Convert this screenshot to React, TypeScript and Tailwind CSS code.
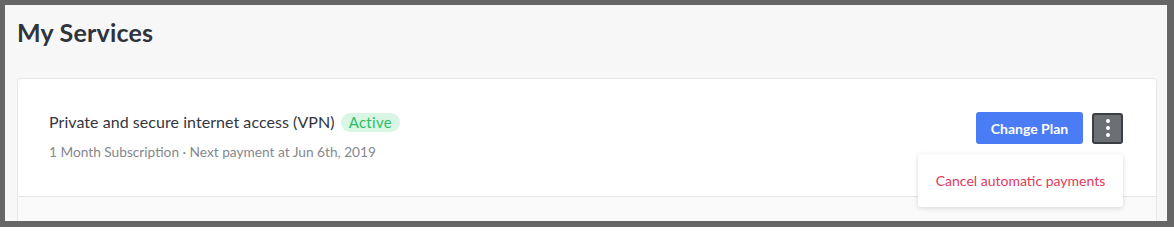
import React from "react";

export default function App() {
  return (
    <div className="w-[1174px] h-[227px] bg-[#666666] pl-[5px] pt-[5px] pr-[7px] pb-[6px] font-['Lato',sans-serif]">
      <div className="h-full bg-[#f7f7f8] overflow-hidden pl-[12px] pr-[10px]">
        <h1 className="pt-[12px] text-[25px] leading-[30px] font-bold text-[#2f333a] tracking-[0.2px]">
          My Services
        </h1>
        <div className="mt-[31px] bg-white border border-[#e7e7e9] rounded-[4px]">
          <div className="flex items-start justify-between pl-[31px] pr-[33px] pt-[33px] pb-[34px] border-b border-[#e7e7e9]">
            <div className="flex flex-col">
              <div className="flex items-center gap-[6px] h-[20px]">
                <span className="text-[16px] tracking-[0.05px] text-[#33363c]">Private and secure internet access (VPN)</span>
                <span className="px-[8px] h-[19px] leading-[19px] rounded-full bg-[#d8f6e3] text-[#2ebd68] text-[15px] tracking-[0.3px]">
                  Active
                </span>
              </div>
              <div className="mt-[10px] text-[13.7px] text-[#85888d] leading-[20px]">
                1 Month Subscription · Next payment at Jun 6th, 2019
              </div>
            </div>
            <div className="flex items-center gap-[9px]">
              <button className="h-[32px] w-[107px] rounded-[3px] bg-[#4a7cf6] text-white text-[14px] font-bold">
                Change Plan
              </button>
              <div className="relative">
                <button className="w-[31px] h-[31px] rounded-[3px] bg-[#6c6f74] border-2 border-[#3b3e43] flex flex-col items-center justify-center gap-[3px]">
                  <span className="w-[4px] h-[4px] rounded-full bg-white" />
                  <span className="w-[4px] h-[4px] rounded-full bg-white" />
                  <span className="w-[4px] h-[4px] rounded-full bg-white" />
                </button>
                <div className="absolute right-0 top-[41px] w-[205px] h-[53px] bg-white rounded-[3px] shadow-[0_1px_5px_rgba(0,0,0,0.15)] flex items-center justify-center">
                  <span className="text-[14px] text-[#e0395c]">Cancel automatic payments</span>
                </div>
              </div>
            </div>
          </div>
          <div className="h-[40px] bg-[#fafafa]" />
        </div>
      </div>
    </div>
  );
}
